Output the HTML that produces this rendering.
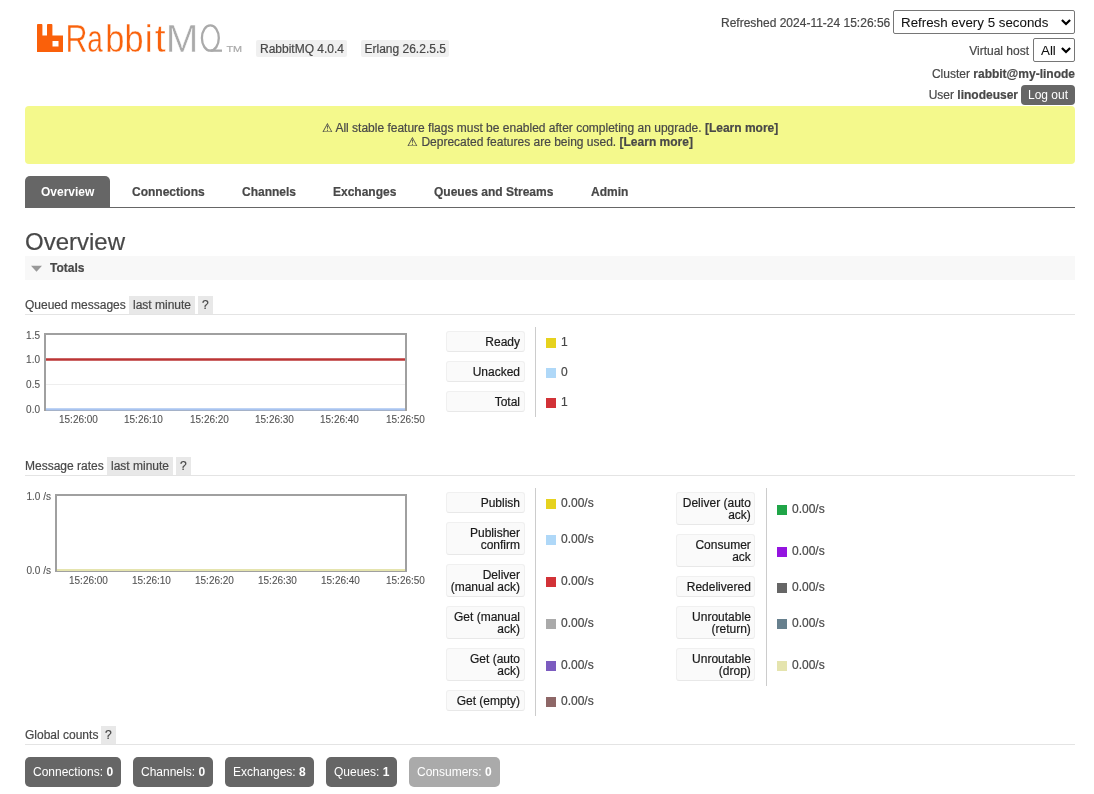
<!DOCTYPE html>
<html><head><meta charset="utf-8">
<style>
html,body{margin:0;padding:0;background:#fff;}
body{width:1094px;height:794px;overflow:hidden;position:relative;will-change:transform;font-family:"Liberation Sans",sans-serif;font-size:12px;color:#484848;}
.a{position:absolute;white-space:nowrap;line-height:14px;}
b{font-weight:bold;}
div{-webkit-text-stroke-width:0.2px;}
/* logo */
.logo-r{position:absolute;background:#f60;}
.badge{position:absolute;top:40px;height:17px;background:#f0f0f0;border-radius:2px;line-height:19px;padding:0 3px 0 4px;color:#484848;}
.sel{position:absolute;box-sizing:border-box;border:1px solid #767676;border-radius:2px;background:#fff;color:#111;font-size:13.333px;height:24px;line-height:23px;-webkit-text-stroke-width:0.05px;}
.chev{position:absolute;top:0;}
.tab{position:absolute;top:177px;height:31px;line-height:31px;font-weight:bold;color:#484848;}
.hr{position:absolute;left:25px;width:1050px;height:1px;background:#e4e4e4;}
.hlp{position:absolute;height:18px;line-height:18px;background:#e8e8e8;padding:0 4px;}
.ylab{position:absolute;font-size:10px;line-height:12px;color:#545454;text-align:right;-webkit-text-stroke-width:0.1px;}
.xlab{position:absolute;font-size:10px;line-height:12px;color:#545454;-webkit-text-stroke-width:0.1px;}
.lb{position:absolute;box-sizing:border-box;width:79px;background:#fafafa;border:1px solid #f0f0f0;border-bottom-color:#e8e8e8;border-radius:3px;text-align:right;padding-right:4px;color:#1a1a1a;line-height:12px;}
.sw{position:absolute;width:10px;height:10px;}
.val{position:absolute;line-height:14px;color:#484848;}
.vdiv{position:absolute;width:1px;background:#ccc;}
.btn{position:absolute;top:757px;height:30px;line-height:30px;border-radius:5px;background:#666;color:#fff;padding:0 8px;box-sizing:border-box;-webkit-text-stroke-width:0;}
</style></head><body>

<!-- Logo -->
<svg style="position:absolute;left:0;top:0;" width="250" height="70">
<path d="M37 25Q37 24.1 37.9 24.1H41.5Q42.4 24.1 42.4 25V35.6H47V25Q47 24.1 47.9 24.1H51.5Q52.4 24.1 52.4 25V35.6H63V52H37Z M52.5 41V46.5H58.5V41Z" fill="#fa600a" fill-rule="evenodd"/>
<g font-family="Liberation Sans" font-size="37.3" stroke="#fff" stroke-width="0.4">
<text transform="translate(65.54,52) scale(0.815,1.06)" fill="#f9620c">R</text>
<text transform="translate(87.25,52) scale(0.750,1.06)" fill="#f9620c">a</text>
<text transform="translate(105.13,52) scale(0.925,1.06)" fill="#f9620c">b</text>
<text transform="translate(124.44,52) scale(0.919,1.06)" fill="#f9620c">b</text>
<text transform="translate(144.80,52) scale(0.950,1.06)" fill="#f9620c">i</text>
<text transform="translate(154.67,52) scale(1.050,1.06)" fill="#f9620c">t</text>
<text transform="translate(165.75,52) scale(1.050,1.06)" fill="#aaa">M</text>
</g>
<ellipse cx="210.35" cy="38.05" rx="8.45" ry="12.65" fill="none" stroke="#aaa" stroke-width="2.3"/>
<path d="M210.5 50.65H222" stroke="#aaa" stroke-width="2.3" fill="none"/>
<text x="226.5" y="51.8" font-family="Liberation Sans" font-size="9.6" fill="#aaa" stroke="#aaa" stroke-width="0.2" textLength="15.6" lengthAdjust="spacingAndGlyphs">TM</text>
</svg>

<div class="badge" style="left:256px;">RabbitMQ 4.0.4</div>
<div class="badge" style="left:360.5px;">Erlang 26.2.5.5</div>

<!-- status -->
<div class="a" style="left:721px;top:16px;">Refreshed 2024-11-24 15:26:56</div>
<div class="sel" style="left:893px;top:10px;width:182px;padding-left:7px;">Refresh every 5 seconds</div>
<div class="a" style="right:65px;top:44px;">Virtual host</div>
<div class="sel" style="left:1033px;top:38px;width:42px;padding-left:7px;">All</div>
<svg style="position:absolute;left:1055px;top:14px;" width="20" height="45"><path d="M7.7 6.7L11 10L14.3 6.7M7.7 34.7L11 38L14.3 34.7" fill="none" stroke="#000" stroke-width="2.2" stroke-linecap="square"/></svg>
<div class="a" style="right:19px;top:67px;">Cluster <b>rabbit@my-linode</b></div>
<div class="a" style="right:76px;top:88px;">User <b>linodeuser</b></div>
<div style="position:absolute;left:1021px;top:85px;width:54px;height:20px;line-height:20px;border-radius:4px;background:#666;color:#fff;text-align:center;-webkit-text-stroke-width:0;">Log out</div>

<!-- banner -->
<div style="position:absolute;left:25px;top:106px;width:1050px;height:58px;background:#f4f98c;border-radius:4px;text-align:center;line-height:14px;">
<div style="position:absolute;left:0;right:0;top:15px;">⚠ All stable feature flags must be enabled after completing an upgrade. <b>[Learn more]</b></div>
<div style="position:absolute;left:0;right:0;top:29px;">⚠ Deprecated features are being used. <b>[Learn more]</b></div>
</div>

<!-- tabs -->
<div style="position:absolute;left:25px;top:176px;width:85px;height:31px;background:#666;border-radius:5px 5px 0 0;"></div>
<div class="tab" style="left:41px;color:#fff;-webkit-text-stroke-width:0;">Overview</div>
<div class="tab" style="left:132px;">Connections</div>
<div class="tab" style="left:242px;">Channels</div>
<div class="tab" style="left:333px;">Exchanges</div>
<div class="tab" style="left:434px;">Queues and Streams</div>
<div class="tab" style="left:591px;">Admin</div>
<div style="position:absolute;left:25px;top:207px;width:1050px;height:1px;background:#666;"></div>

<!-- h1 -->
<div class="a" style="left:25px;top:228px;font-size:24px;line-height:28px;">Overview</div>
<div style="position:absolute;left:25px;top:256px;width:1050px;height:24px;background:#f8f8f8;"></div>
<svg style="position:absolute;left:31px;top:265px;" width="11" height="7"><path d="M0 0.7H11L5.5 6.8Z" fill="#999"/></svg>
<div class="a" style="left:50px;top:261px;font-weight:bold;">Totals</div>

<!-- queued messages -->
<div class="a" style="left:25px;top:298px;">Queued messages</div>
<div class="hlp" style="left:129px;top:296px;">last minute</div>
<div class="hlp" style="left:198px;top:296px;">?</div>
<div class="hr" style="top:314px;"></div>

<svg style="position:absolute;left:0;top:0;" width="1094" height="794">
<g fill="none">
<line x1="46" y1="384.5" x2="405" y2="384.5" stroke="#eee" stroke-width="1"/>
<line x1="46" y1="359.5" x2="405" y2="359.5" stroke="#eee" stroke-width="1"/>
<rect x="45" y="334" width="361" height="76" stroke="#a0a0a0" stroke-width="2"/>
<line x1="46" y1="359.5" x2="405" y2="359.5" stroke="#bb3535" stroke-width="2.3"/>
<line x1="46" y1="409.3" x2="405" y2="409.3" stroke="#a9c4f0" stroke-width="2.2"/>
<line x1="56" y1="384.5" x2="405" y2="384.5" stroke="#eee" stroke-width="0"/>
<rect x="56" y="495" width="350" height="76" stroke="#a0a0a0" stroke-width="2"/>
<line x1="57" y1="570" x2="405" y2="570" stroke="#e5e4ae" stroke-width="2"/>
</g>
</svg>
<div class="ylab" style="left:20px;width:20px;top:330px;">1.5</div>
<div class="ylab" style="left:20px;width:20px;top:354px;">1.0</div>
<div class="ylab" style="left:20px;width:20px;top:379px;">0.5</div>
<div class="ylab" style="left:20px;width:20px;top:404px;">0.0</div>
<div class="xlab" style="left:59px;top:414px;">15:26:00</div>
<div class="xlab" style="left:124px;top:414px;">15:26:10</div>
<div class="xlab" style="left:190px;top:414px;">15:26:20</div>
<div class="xlab" style="left:255px;top:414px;">15:26:30</div>
<div class="xlab" style="left:320px;top:414px;">15:26:40</div>
<div class="xlab" style="left:386px;top:414px;">15:26:50</div>

<div class="vdiv" style="left:535px;top:327px;height:90px;"></div>
<div class="lb" style="left:446px;top:331px;height:21px;padding-top:3.5px;">Ready</div>
<div class="lb" style="left:446px;top:361px;height:21px;padding-top:3.5px;">Unacked</div>
<div class="lb" style="left:446px;top:391px;height:21px;padding-top:3.5px;">Total</div>
<div class="sw" style="left:546px;top:338px;background:#e6d21e;"></div>
<div class="sw" style="left:546px;top:368px;background:#afd8f8;"></div>
<div class="sw" style="left:546px;top:398px;background:#d23237;"></div>
<div class="val" style="left:561px;top:335px;">1</div>
<div class="val" style="left:561px;top:365px;">0</div>
<div class="val" style="left:561px;top:395px;">1</div>

<!-- message rates -->
<div class="a" style="left:25px;top:459px;">Message rates</div>
<div class="hlp" style="left:107px;top:457px;">last minute</div>
<div class="hlp" style="left:176px;top:457px;">?</div>
<div class="hr" style="top:475px;"></div>

<div class="vdiv" style="left:535px;top:488px;height:228px;"></div>
<div class="vdiv" style="left:766px;top:488px;height:198px;"></div>
<div class="lb" style="left:446px;top:492px;height:21px;padding-top:3.5px;">Publish</div>
<div class="sw" style="left:546px;top:499px;background:#e6d21e;"></div>
<div class="val" style="left:561px;top:496px;">0.00/s</div>
<div class="lb" style="left:446px;top:522px;height:33px;padding-top:3.5px;">Publisher<br>confirm</div>
<div class="sw" style="left:546px;top:535px;background:#afd8f8;"></div>
<div class="val" style="left:561px;top:532px;">0.00/s</div>
<div class="lb" style="left:446px;top:564px;height:33px;padding-top:3.5px;">Deliver<br>(manual ack)</div>
<div class="sw" style="left:546px;top:577px;background:#d23237;"></div>
<div class="val" style="left:561px;top:574px;">0.00/s</div>
<div class="lb" style="left:446px;top:606px;height:33px;padding-top:3.5px;">Get (manual<br>ack)</div>
<div class="sw" style="left:546px;top:619px;background:#aaaaaa;"></div>
<div class="val" style="left:561px;top:616px;">0.00/s</div>
<div class="lb" style="left:446px;top:648px;height:33px;padding-top:3.5px;">Get (auto<br>ack)</div>
<div class="sw" style="left:546px;top:661px;background:#7c5cc0;"></div>
<div class="val" style="left:561px;top:658px;">0.00/s</div>
<div class="lb" style="left:446px;top:690px;height:21px;padding-top:3.5px;">Get (empty)</div>
<div class="sw" style="left:546px;top:697px;background:#8e6767;"></div>
<div class="val" style="left:561px;top:694px;">0.00/s</div>
<div class="lb" style="left:676px;top:492px;height:33px;padding-top:3.5px;padding-right:3.2px;">Deliver (auto<br>ack)</div>
<div class="sw" style="left:777px;top:505px;background:#20a548;"></div>
<div class="val" style="left:792px;top:502px;">0.00/s</div>
<div class="lb" style="left:676px;top:534px;height:33px;padding-top:3.5px;padding-right:3.2px;">Consumer<br>ack</div>
<div class="sw" style="left:777px;top:547px;background:#9414e0;"></div>
<div class="val" style="left:792px;top:544px;">0.00/s</div>
<div class="lb" style="left:676px;top:576px;height:21px;padding-top:3.5px;padding-right:3.2px;">Redelivered</div>
<div class="sw" style="left:777px;top:583px;background:#666666;"></div>
<div class="val" style="left:792px;top:580px;">0.00/s</div>
<div class="lb" style="left:676px;top:606px;height:33px;padding-top:3.5px;padding-right:3.2px;">Unroutable<br>(return)</div>
<div class="sw" style="left:777px;top:619px;background:#67808e;"></div>
<div class="val" style="left:792px;top:616px;">0.00/s</div>
<div class="lb" style="left:676px;top:648px;height:33px;padding-top:3.5px;padding-right:3.2px;">Unroutable<br>(drop)</div>
<div class="sw" style="left:777px;top:661px;background:#e5e4ae;"></div>
<div class="val" style="left:792px;top:658px;">0.00/s</div>
<div class="ylab" style="left:20px;width:31px;top:491px;">1.0 /s</div>
<div class="ylab" style="left:20px;width:31px;top:565px;">0.0 /s</div>
<div class="xlab" style="left:69px;top:575px;">15:26:00</div>
<div class="xlab" style="left:132px;top:575px;">15:26:10</div>
<div class="xlab" style="left:195px;top:575px;">15:26:20</div>
<div class="xlab" style="left:258px;top:575px;">15:26:30</div>
<div class="xlab" style="left:321px;top:575px;">15:26:40</div>
<div class="xlab" style="left:386px;top:575px;">15:26:50</div>

<!-- global counts -->
<div class="a" style="left:25px;top:728px;">Global counts</div>
<div class="hlp" style="left:101px;top:726px;">?</div>
<div class="hr" style="top:744px;"></div>
<div class="btn" style="left:25px;">Connections: <b>0</b></div>
<div class="btn" style="left:133px;">Channels: <b>0</b></div>
<div class="btn" style="left:225px;">Exchanges: <b>8</b></div>
<div class="btn" style="left:326px;">Queues: <b>1</b></div>
<div class="btn" style="left:409px;background:#aaa;">Consumers: <b>0</b></div>

</body></html>
